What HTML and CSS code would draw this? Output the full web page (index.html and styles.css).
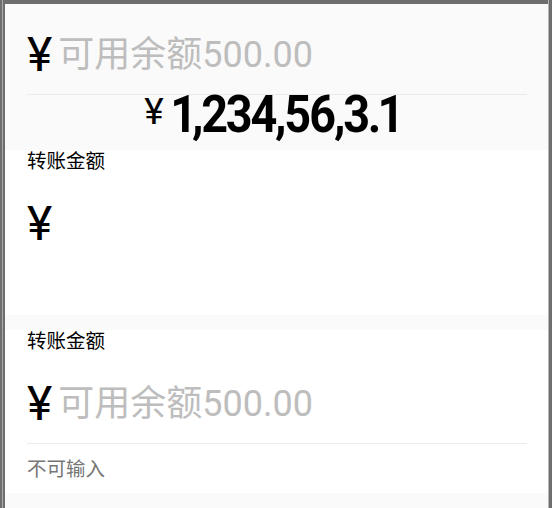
FILE: index.html
```html
<!DOCTYPE html>
<html lang="zh-CN">
<head>
    <meta charset="UTF-8">
    <meta name="viewport" content="width=device-width, initial-scale=1.0">
    <title>转账金额</title>
    <link rel="stylesheet" href="styles.css">
</head>
<body>
    <div class="screen">
        <section class="summary">
            <div class="field">
                <span class="yen">¥</span>
                <span class="placeholder">可用余额500.00</span>
            </div>
            <div class="amount">
                <span class="amount-yen">¥</span>
                <span class="amount-num">1,234,56,3.1</span>
            </div>
        </section>
        <section class="transfer transfer-first">
            <div class="label">转账金额</div>
            <div class="field field-bare">
                <span class="yen">¥</span>
            </div>
            <div class="hint">&nbsp;</div>
        </section>
        <div class="gap"></div>
        <section class="transfer">
            <div class="label">转账金额</div>
            <div class="field">
                <span class="yen">¥</span>
                <span class="placeholder">可用余额500.00</span>
            </div>
            <div class="hint">不可输入</div>
        </section>
    </div>
</body>
</html>
```

FILE: styles.css
```css
body {
    margin: 0;
    height: 100vh;
    box-sizing: border-box;
    padding: 4px 4px 0 5px;
    display: flex;
    flex-direction: column;
    font-family: Roboto, "Noto Sans CJK SC", sans-serif;
    background: linear-gradient(to right, #6e6e6e 0 2px, #a9a9a9 2px 3px, #6e6e6e 3px calc(100% - 4px), #b8b8b8 calc(100% - 4px) calc(100% - 3px), #6e6e6e calc(100% - 3px));
}
.screen {
    flex: 1;
    background: #fafafa;
}
.summary {
    padding: 11px 21px 15px 22px;
}
.field {
    height: 79px;
    display: flex;
    align-items: center;
    border-bottom: 1px solid #ebebeb;
}
.field-bare {
    border-bottom-color: transparent;
}
.yen {
    font-size: 48px;
    line-height: 56px;
    color: #000;
}
.placeholder {
    font-size: 36px;
    line-height: 40px;
    color: #bdbdbd;
    margin-left: 6px;
}
.amount {
    display: flex;
    justify-content: center;
    align-items: center;
    height: 40px;
}
.amount-yen {
    font-size: 37px;
    line-height: 40px;
    margin: 0 12px 7px 0;
}
.amount-num {
    display: inline-block;
    font-size: 52px;
    font-weight: 700;
    line-height: 40px;
    letter-spacing: -2.5px;
    font-variant-numeric: proportional-nums;
    transform: scaleX(0.9);
    margin: 0 -2px 0 -17px;
}
.transfer {
    background: #fff;
    padding: 0 21px 0 22px;
}
.transfer-first {
    padding-bottom: 2px;
}
.transfer .field {
    margin-top: 10px;
}
.label {
    font-size: 19.5px;
    line-height: 24px;
    color: #000;
}
.hint {
    font-size: 19.5px;
    line-height: 24px;
    color: #757575;
    padding: 14px 0 11px;
}
.gap {
    height: 15px;
}
```
